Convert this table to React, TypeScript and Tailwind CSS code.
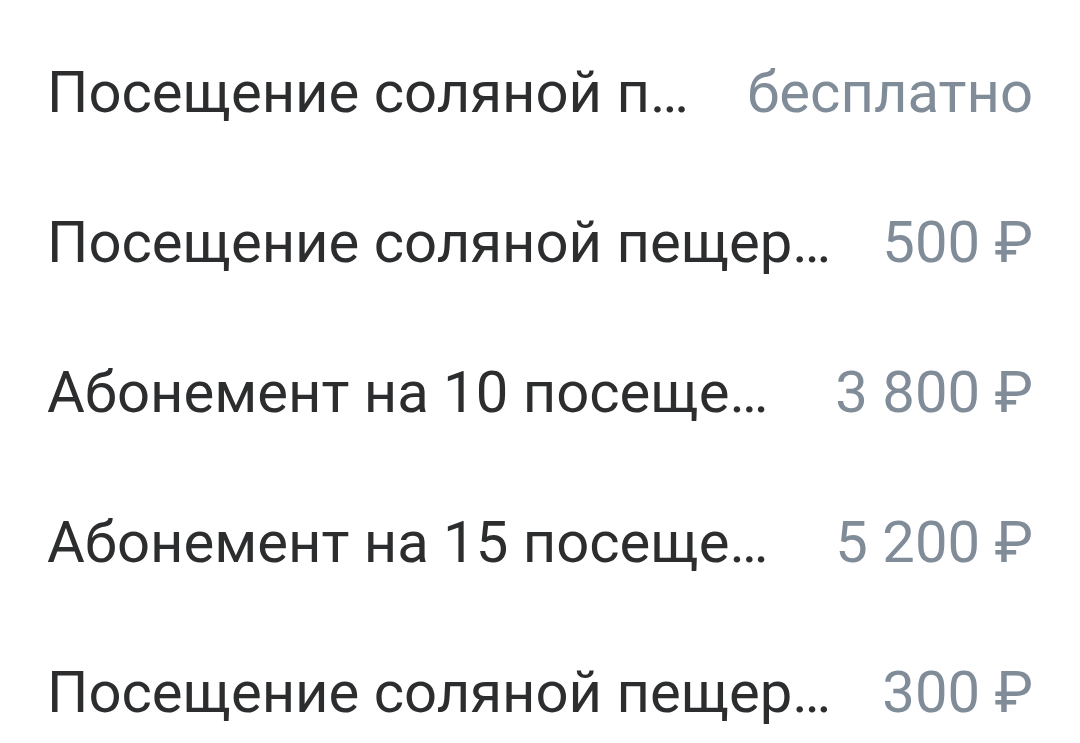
import React from 'react';

const services = [
  { name: 'Посещение соляной п…', price: 'бесплатно' },
  { name: 'Посещение соляной пещер…', price: '500 ₽' },
  { name: 'Абонемент на 10 посеще…', price: '3 800 ₽' },
  { name: 'Абонемент на 15 посеще…', price: '5 200 ₽' },
  { name: 'Посещение соляной пещер…', price: '300 ₽' },
];

const App: React.FC = () => {
  return (
    <div className="w-[1080px] h-[743px] overflow-hidden bg-white pt-[17px] font-['Roboto',sans-serif]">
      {services.map((s, i) => (
        <div key={i} className="flex items-center justify-between gap-6 pl-[47px] pr-[47px] h-[150px] leading-[150px] text-[58px]">
          <span className="min-w-0 truncate text-[#2c2d2e]">{s.name}</span>
          <span className="shrink-0 text-[#818c99]">{s.price}</span>
        </div>
      ))}
    </div>
  );
};

export default App;
